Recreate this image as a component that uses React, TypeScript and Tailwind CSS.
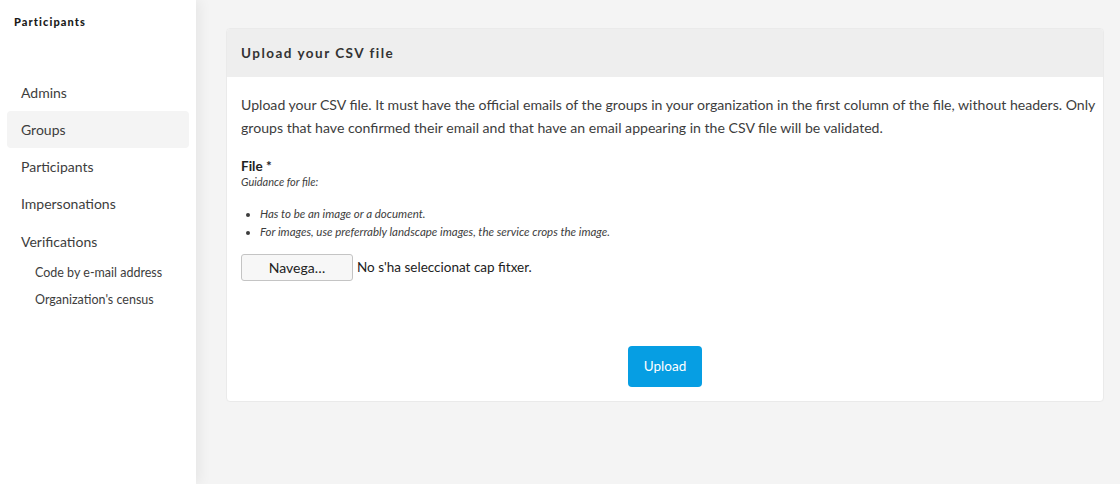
import React from 'react';

const menu = [
  { label: 'Admins' },
  { label: 'Groups', active: true },
  { label: 'Participants' },
  { label: 'Impersonations' },
];

export default function App() {
  return (
    <div
      className="flex h-[484px] w-[1120px] overflow-hidden bg-[#f4f4f4] text-[#3d3d3d]"
      style={{ fontFamily: 'Lato, "Noto Sans", sans-serif' }}
    >
      <aside className="relative z-10 w-[196px] shrink-0 bg-white shadow-[4px_0_12px_rgba(0,0,0,0.06)]">
        <div className="px-[14px] pt-[14px] text-[11px] font-black tracking-[0.1em] text-[#1a1a1a]">
          Participants
        </div>
        <nav className="mt-[43px] px-[7px]">
          {menu.map((item) => (
            <div
              key={item.label}
              className={`flex h-[37px] items-center rounded px-[14px] text-[14px] ${
                item.active ? 'bg-[#f4f4f4]' : ''
              }`}
            >
              {item.label}
            </div>
          ))}
          <div className="flex h-[40px] items-center px-[14px] text-[14px]">Verifications</div>
          <div className="pl-[28px] text-[12.5px]">
            <div className="flex h-[24px] items-center">Code by e-mail address</div>
            <div className="flex h-[30px] items-center">Organization's census</div>
          </div>
        </nav>
      </aside>

      <main className="flex-1 pl-[30px] pr-[16px] pt-[28px]">
        <div className="overflow-hidden rounded border border-[#eaeaea] bg-white">
          <div className="flex h-[48px] items-center bg-[#eeeeee] px-[14px] text-[13.5px] font-bold tracking-[0.11em] text-[#333]">
            Upload your CSV file
          </div>
          <div className="px-[14px] pb-[14px] pt-[16px]">
            <p className="mr-[-6px] text-[14.1px] leading-[23px]">
              Upload your CSV file. It must have the official emails of the groups in your organization in the
              first column of the file, without headers. Only groups that have confirmed their email and that
              have an email appearing in the CSV file will be validated.
            </p>
            <div className="mt-[19px]">
              <div className="text-[13.5px] font-bold leading-[17px] text-[#222]">File *</div>
              <div className="text-[11px] italic leading-[13px]">Guidance for file:</div>
              <ul className="mt-[17px] list-disc pl-[19px] text-[11.5px] italic leading-[18px]">
                <li>Has to be an image or a document.</li>
                <li>For images, use preferrably landscape images, the service crops the image.</li>
              </ul>
              <div className="mt-[13px] flex items-center gap-[4px]">
                <button
                  type="button"
                  className="h-[27px] w-[112px] rounded-[3px] border border-[#c4c4c4] bg-[#f7f7f7] text-[14px] text-[#222]"
                >
                  Navega…
                </button>
                <span className="text-[13.5px] text-[#222]">No s'ha seleccionat cap fitxer.</span>
              </div>
            </div>
            <div className="mt-[65px] flex justify-center">
              <button
                type="button"
                className="h-[41px] w-[74px] rounded bg-[#069ee3] text-[13.5px] text-white"
              >
                Upload
              </button>
            </div>
          </div>
        </div>
      </main>
    </div>
  );
}
